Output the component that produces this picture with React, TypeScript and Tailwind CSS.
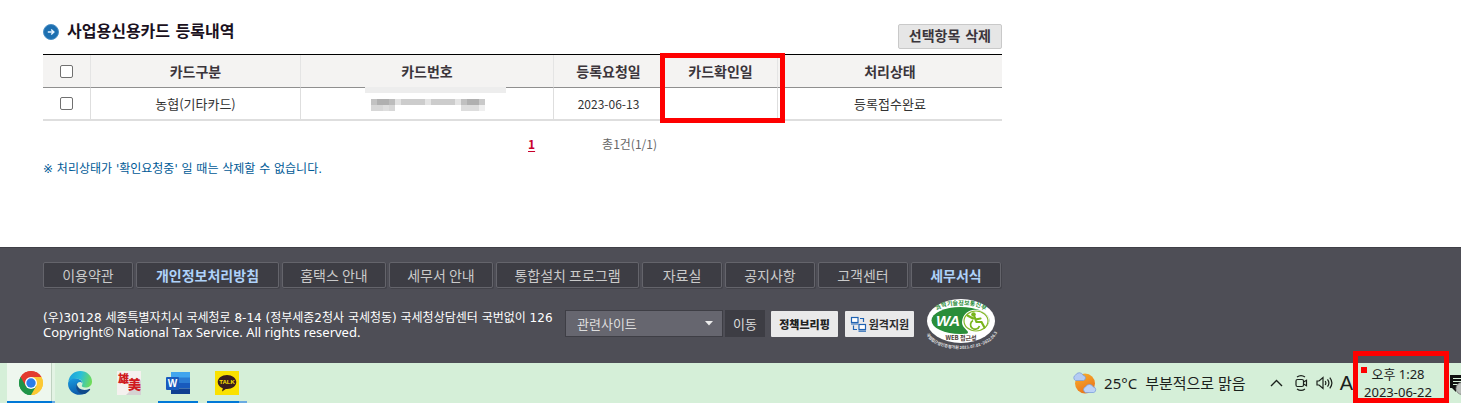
import React from "react";

type FooterLink = { label: string; width: string; strong?: boolean };

const footerLinks: FooterLink[] = [
  { label: "이용약관", width: "w-[90px]" },
  { label: "개인정보처리방침", width: "w-[143px]", strong: true },
  { label: "홈택스 안내", width: "w-[104px]" },
  { label: "세무서 안내", width: "w-[104px]" },
  { label: "통합설치 프로그램", width: "w-[143px]" },
  { label: "자료실", width: "w-[80px]" },
  { label: "공지사항", width: "w-[90px]" },
  { label: "고객센터", width: "w-[90px]" },
  { label: "세무서식", width: "w-[90px]", strong: true },
];

function ArrowBullet() {
  return (
    <svg width="16" height="16" viewBox="0 0 16 16" aria-hidden="true">
      <circle cx="8" cy="8" r="7.5" fill="#1d6fb0" stroke="#4a8fc4" />
      <path d="M4.8 8h6M8.2 5.4 10.9 8l-2.7 2.6" fill="none" stroke="#e6f4ff" strokeWidth="1.4" />
    </svg>
  );
}

const maskCells: [number, number, number, string][] = [
  [6, 12, 6, "#c2c2c2"], [12, 12, 12, "#b0b0b0"], [24, 12, 6, "#bcbcbc"], [30, 12, 6, "#e2e2e2"],
  [36, 12, 24, "#cccccc"], [60, 12, 6, "#e4e4e4"], [66, 12, 24, "#cccccc"], [90, 12, 6, "#e4e4e4"],
  [96, 12, 6, "#c0c0c0"], [102, 12, 12, "#b0b0b0"], [114, 12, 6, "#c9c9c9"],
  [6, 18, 12, "#d7d7d7"], [18, 18, 6, "#dedede"], [24, 18, 6, "#d7d7d7"],
  [96, 18, 18, "#dddddd"], [114, 18, 6, "#efefef"],
];

function MaskedNumber() {
  return (
    <svg className="absolute -top-px left-16" width="141" height="24" viewBox="0 0 141 24" role="img" aria-label="카드번호">
      <rect width="141" height="6" fill="#ededed" />
      {maskCells.map(([x, y, w, fill]) => (
        <rect key={`${x}-${y}`} x={x} y={y} width={w} height="6" fill={fill} />
      ))}
    </svg>
  );
}

function CardTable() {
  const th = "border-r border-[#e4e4e4] text-sm leading-4 font-bold text-[#3b353b]";
  const td = "border-r border-[#dedede] text-[13px] leading-4 text-[#333]";
  const box = "mx-auto block size-[13px] appearance-none rounded-[2px] border border-[#707070] bg-white checked:bg-[#0075ff]";
  return (
    <div className="relative">
      <table className="w-full table-fixed border-separate border-spacing-0 border-t border-black text-center">
        <colgroup>
          <col className="w-[48px]" />
          <col className="w-[210px]" />
          <col className="w-[253px]" />
          <col className="w-[110px]" />
          <col className="w-[114px]" />
          <col />
        </colgroup>
        <thead>
          <tr className="h-[33px] bg-[#f4f3f2] [&>th]:border-b [&>th]:border-b-[#8f8f8f]">
            <th className={th}><input type="checkbox" aria-label="전체 선택" className={box} /></th>
            <th className={th}>카드구분</th>
            <th className={th}>카드번호</th>
            <th className={th}>등록요청일</th>
            <th className={th}>카드확인일</th>
            <th className="text-sm leading-4 font-bold text-[#3b353b]">처리상태</th>
          </tr>
        </thead>
        <tbody>
          <tr className="h-[33px] [&>td]:border-b-2 [&>td]:border-b-[#dedede]">
            <td className={td}><input type="checkbox" aria-label="농협(기타카드) 선택" className={box} /></td>
            <td className={td}>농협(기타카드)</td>
            <td className={`${td} relative`}><MaskedNumber /></td>
            <td className="border-r border-[#dedede] text-xs leading-4 text-[#333]">2023-06-13</td>
            <td className={td}></td>
            <td className="text-[13px] leading-4 text-[#333]">등록접수완료</td>
          </tr>
        </tbody>
      </table>
      <div className="pointer-events-none absolute -top-px left-[617px] h-[70px] w-[125px] border-[5px] border-[#fe0000]" />
    </div>
  );
}

function WebAccessMark() {
  return (
    <svg width="74" height="58" viewBox="0 -3 74 58" role="img" aria-label="WEB 접근성">
      <defs>
        <path id="mark-top" d="M8 19.500C11 9.500 22 7 36 7S61 9.500 64 19.500" />
        <path id="mark-bottom" d="M1 36C10 56 62 56 72 35" />
      </defs>
      <ellipse cx="36" cy="23" rx="34" ry="22" fill="#fff" />
      <ellipse cx="35.500" cy="22.500" rx="29" ry="13.500" fill="#2a8e3a" />
      <path d="M37 24C38 14 46 10.500 53 12 61 14 65 18.500 64.500 23 63 31 53 36 42 36 46 33 37 31 37 24Z" fill="#fff" />
      <ellipse cx="51" cy="23" rx="12" ry="10" fill="#fff" stroke="#86b82a" strokeWidth="1.200" />
      <text x="11" y="28" fontSize="15" fontWeight="700" fontStyle="italic" fill="#fff" fontFamily="Liberation Sans, sans-serif">WA</text>
      <circle cx="48.500" cy="16.500" r="2.300" fill="#79b51c" />
      <path d="m49.500 19 2 5h5l3 5.500M42.500 17.500l5.500 3M50.500 21.500l5-1" fill="none" stroke="#79b51c" strokeWidth="2.200" strokeLinecap="round" />
      <path d="M48 22.500a4.600 4.600 0 1 0 6.500 5.500" fill="none" stroke="#79b51c" strokeWidth="1.700" />
      <text fontSize="6" fontWeight="700" fill="#2a8e3a"><textPath href="#mark-top" startOffset="50%" textAnchor="middle">과학기술정보통신부</textPath></text>
      <text x="36" y="42" fontSize="6" fontWeight="700" textAnchor="middle" fill="#4a3733">WEB 접근성</text>
      <text fontSize="4" fontWeight="700" fill="#e8e8e8"><textPath href="#mark-bottom" startOffset="50%" textAnchor="middle">한국웹접근성인증평가원 2021.07.01~2022.06.30</textPath></text>
    </svg>
  );
}

function SiteFooter() {
  return (
    <footer className="border-t border-[#404047] bg-[#4e4e56] pt-[14px] pr-4 pb-[14px] pl-[43px]">
      <nav className="flex gap-[3px]">
        {footerLinks.map((l) => (
          <a
            key={l.label}
            href="#"
            className={`${l.width} shrink-0 rounded-[2px] border border-[#64646b] bg-[#3d3d44] text-center text-sm leading-6 whitespace-nowrap shadow-[1px_1px_0_#43434a] ${l.strong ? "font-bold text-[#aed2fa]" : "text-[#cacaca]"}`}
          >
            {l.label}
          </a>
        ))}
      </nav>
      <div className="mt-[10px] flex h-[51px] items-center">
        <address className="w-[522px] shrink-0 pt-0.5 font-['DejaVu_Sans','Noto_Sans_CJK_KR',sans-serif] text-xs leading-[14px] whitespace-nowrap text-white not-italic">
          <p>(우)30128 세종특별자치시 국세청로 8-14 (정부세종2청사 국세청동) 국세청상담센터 국번없이 126</p>
          <p className="font-['Noto_Sans','Noto_Sans_CJK_KR',sans-serif] text-[13px] leading-[14px]">Copyright© National Tax Service. All rights reserved.</p>
        </address>
        <div className="relative w-[158px] shrink-0">
          <select aria-label="관련사이트" className="block h-[27px] w-full appearance-none border border-[#3e3e45] bg-[#66666f] pl-[11px] text-[13px] leading-5 text-[#dedede]">
            <option>관련사이트</option>
          </select>
          <svg className="pointer-events-none absolute top-[11px] right-[10px]" width="8" height="5" viewBox="0 0 8 5" aria-hidden="true">
            <path d="M0 0h8L4 4.500Z" fill="#ececec" />
          </svg>
        </div>
        <button type="button" className="ml-0.5 h-[27px] w-10 shrink-0 bg-[#3d3d44] text-[13px] leading-5 text-[#dcdcdc]">이동</button>
        <a href="#" className="ml-[6px] flex h-[26px] w-[67px] shrink-0 items-center justify-center rounded-[1px] bg-[#e9e9ea] text-[11px] leading-4 font-black text-[#222]">정책브리핑</a>
        <a href="#" className="ml-[7px] flex h-[26px] w-[69px] shrink-0 items-center justify-center gap-0.5 rounded-[1px] bg-[#e9e9ea] text-[11px] leading-4 font-bold text-[#2d2d2d]">
          <svg width="17" height="16" viewBox="0 0 17 16" fill="none" stroke="#1f63b3" strokeWidth="1.200" aria-hidden="true">
            <rect x="1.500" y="1.500" width="6.500" height="5" fill="#fff" />
            <rect x="9" y="8.500" width="6.500" height="5" fill="#fff" />
            <path d="M10 2.500h3.500V6M3.500 9.500v4H7M8.500 15.200H16M1 8h7.500" />
          </svg>
          원격지원
        </a>
        <div className="ml-[11px] shrink-0"><WebAccessMark /></div>
      </div>
    </footer>
  );
}

function ChromeIcon() {
  return (
    <svg width="24" height="24" viewBox="0 0 24 24" aria-hidden="true">
      <path d="M12 12 1.610 6A12 12 0 0 1 22.390 6Z" fill="#e33b2e" />
      <path d="M12 12 22.390 6A12 12 0 0 1 12 24Z" fill="#fcc934" />
      <path d="M12 12v12A12 12 0 0 1 1.610 6Z" fill="#1e9447" />
      <path d="M12 6h10.390A12 12 0 0 1 12 24l5.200-9Z" fill="#fcc934" />
      <path d="m6.800 15-5.190-9A12 12 0 0 0 12 24l5.200-9Z" fill="#1e9447" />
      <path d="M12 6h10.390A12 12 0 0 0 1.610 6l5.190 9Z" fill="#e33b2e" />
      <circle cx="12" cy="12" r="6" fill="#fff" />
      <circle cx="12" cy="12" r="4.700" fill="#2a7de9" />
    </svg>
  );
}

function EdgeIcon() {
  return (
    <svg width="24" height="24" viewBox="0 0 24 24" aria-hidden="true">
      <defs>
        <linearGradient id="edge-top" x1="0" y1="0.300" x2="1" y2="0.500">
          <stop offset="0" stopColor="#1aa0dc" />
          <stop offset="0.500" stopColor="#2bbfd8" />
          <stop offset="1" stopColor="#6fdc58" />
        </linearGradient>
        <linearGradient id="edge-left" x1="0" y1="0" x2="0.300" y2="1">
          <stop offset="0" stopColor="#1b9de0" />
          <stop offset="1" stopColor="#0b5cab" />
        </linearGradient>
      </defs>
      <path d="M0.300 10.500C1.500 4 6.500 0 12.200 0 19 0 24 5 24 10.500c0 4-3 6-6.500 6-3 0-4.300-1-3.500-2.200C15.500 12 14 8 9 7.800 5 7.600 2 8.800.3 10.500Z" fill="url(#edge-top)" />
      <path d="M.1 12C.5 8.500 4.500 7.300 8 7.500c3.500.2 6.300 2 6.300 5-.3-1-1.300-1.500-2.300-1.500-2.500 0-4 2.500-3.300 5.300C9.500 20 14 22 17 22.800 8 26.500-.6 20 .1 12Z" fill="url(#edge-left)" />
      <path d="M8.700 12.800c-1.200 2.500-.6 6 1.800 8.100 2.600 2.400 5.700 2.500 7 1.800 2-1 3.700-2.600 4.600-4.200.3-.6-.2-.9-.7-.6-5.700 2.600-11.500.6-12.700-5.100Z" fill="#114a8b" />
    </svg>
  );
}

function CalligraphyIcon() {
  return (
    <svg width="24" height="24" viewBox="0 0 24 24" aria-hidden="true">
      <rect width="24" height="24" fill="#f5f1ef" />
      <path d="M24 9v15H9Z" fill="#d5d2d2" />
      <text x="1" y="12" fontSize="11" fontWeight="900" fill="#cf1a20">雄</text>
      <text x="11" y="18" fontSize="13" fontWeight="900" fill="#cf1a20">美</text>
    </svg>
  );
}

function WordIcon() {
  return (
    <svg width="24" height="24" viewBox="0 0 24 24" aria-hidden="true">
      <path d="M5 1h19v6H5Z" fill="#41a5ee" />
      <path d="M5 6.500h19V12H5Z" fill="#2b7cd3" />
      <path d="M5 12h19v5.500H5Z" fill="#185abd" />
      <path d="M5 17.500h19V23H5Z" fill="#103f91" />
      <rect y="6" width="13" height="13" rx="1" fill="#185abd" />
      <text x="6.500" y="16.200" fontSize="10" fontWeight="700" textAnchor="middle" fill="#fff" fontFamily="Liberation Sans, sans-serif">W</text>
    </svg>
  );
}

function TalkIcon() {
  return (
    <svg width="24" height="24" viewBox="0 0 24 24" aria-hidden="true">
      <rect width="24" height="24" fill="#fae100" />
      <path d="M12 4c5 0 9.300 3 9.300 7s-4 7-9.300 7l-1.200-.1L7 20.500l.8-3.300C4.700 16.100 2.700 13.800 2.700 11 2.700 7 7 4 12 4Z" fill="#371c1d" />
      <text x="12" y="13.200" fontSize="6" fontWeight="700" textAnchor="middle" fill="#fae100" fontFamily="Liberation Sans, sans-serif">TALK</text>
    </svg>
  );
}

function WeatherIcon() {
  return (
    <svg width="26" height="24" viewBox="0 0 26 24" aria-hidden="true">
      <defs>
        <linearGradient id="sun" x1="0.200" y1="0" x2="0.700" y2="1">
          <stop offset="0" stopColor="#f9ae2b" />
          <stop offset="1" stopColor="#e8701a" />
        </linearGradient>
      </defs>
      <circle cx="13" cy="12.500" r="10" fill="url(#sun)" />
      <path d="M3.500 9.500a3 3 0 0 1 .2-5.500A4 4 0 0 1 11 4.200a2.700 2.700 0 0 1 .5 5.300Z" fill="#b4cbf3" stroke="#7c9fdc" strokeWidth="0.800" />
      <path d="M13.500 21.500a3 3 0 0 1 .2-5.700 4.200 4.200 0 0 1 7.600.1 2.900 2.900 0 0 1 .5 5.600Z" fill="#bcd2f7" stroke="#7c9fdc" strokeWidth="0.800" />
    </svg>
  );
}

const tasks = [
  { name: "Chrome", icon: <ChromeIcon />, tile: "bg-[#eef7ee] shadow-[inset_-3px_0_0_#e3f3e4,inset_-4px_0_0_#bfd2c1]", line: "w-[45px]", tail: "w-[3px]" },
  { name: "Edge", icon: <EdgeIcon />, tile: "", line: "", tail: "" },
  { name: "雄美", icon: <CalligraphyIcon />, tile: "", line: "", tail: "" },
  { name: "Word", icon: <WordIcon />, tile: "", line: "w-10", tail: "" },
  { name: "KakaoTalk", icon: <TalkIcon />, tile: "", line: "w-8", tail: "w-2" },
];

function Taskbar() {
  return (
    <div className="flex h-10 items-stretch justify-between bg-[#d5efd8] text-[#1b211c]">
      <div className="flex gap-px pl-[7px]">
        {tasks.map((t) => (
          <button key={t.name} type="button" aria-label={t.name} className={`flex w-12 flex-col items-center justify-between pt-2 ${t.tile}`}>
            {t.icon}
            <span className="flex h-0.5 justify-center">
              {t.line && <span className={`h-full bg-[#0078d7] ${t.line}`} />}
              {t.tail && <span className={`h-full bg-[#6aabe2] ${t.tail}`} />}
            </span>
          </button>
        ))}
      </div>
      <div className="flex items-center">
        <WeatherIcon />
        <span className="ml-[6px] flex gap-2 font-['Noto_Sans','Noto_Sans_CJK_KR',sans-serif] text-[15px] leading-5 whitespace-nowrap">
          <span>25°C</span>
          <span>부분적으로 맑음</span>
        </span>
        <div className="ml-6 flex items-center">
          <svg width="13" height="8" viewBox="0 0 13 8" fill="none" stroke="#1b211c" strokeWidth="1.400" aria-hidden="true"><path d="m1 7 5.500-5.500L12 7" /></svg>
          <svg className="ml-3" width="13" height="18" viewBox="0 0 13 18" fill="none" stroke="#1b211c" strokeWidth="1.200" aria-hidden="true">
            <rect x="1" y="5.500" width="7.500" height="7" rx="1.500" />
            <path d="m8.500 8 3-1.800v5.600l-3-1.800M2 3Q6 .2 10 3M2 15q4 2.800 8 0" />
          </svg>
          <svg className="ml-2" width="18" height="16" viewBox="0 0 18 16" fill="none" stroke="#1b211c" strokeWidth="1.200" aria-hidden="true">
            <path d="M1 6v4h2l4 3.500v-11L3 6ZM9.200 6q1.300 2 0 4M11.500 4.300q2.800 3.700 0 7.400M13.800 2.700q4.200 5.300 0 10.600" />
          </svg>
          <span className="ml-1.5 font-['Liberation_Sans',sans-serif] text-xl leading-5">A</span>
        </div>
        <div className="relative flex h-full w-24 flex-col items-center justify-center pr-1.5 font-['Noto_Sans','Noto_Sans_CJK_KR',sans-serif] text-[13px] leading-[18px] whitespace-nowrap">
          <span>오후 1:28</span>
          <span>2023-06-22</span>
          <span className="pointer-events-none absolute -top-3 bottom-0 left-0 w-full border-[5px] border-[#fe0000]" />
          <span className="absolute top-1 left-2 size-[6px] bg-[#fe0000]" />
        </div>
        <svg width="12" height="24" viewBox="0 0 12 24" aria-hidden="true">
          <path d="M1 4h11v13H7v4l-4-4H1Z" fill="#111" />
          <path d="M4 7.500h8M4 10.500h8M4 13.500h5" stroke="#d5efd8" strokeWidth="1.200" />
          <circle cx="13" cy="17.500" r="6" fill="#b9bdb9" stroke="#777" strokeWidth="0.800" />
        </svg>
      </div>
    </div>
  );
}

export default function App() {
  return (
    <div className="flex flex-col overflow-hidden bg-white font-['Noto_Sans_CJK_KR',sans-serif]">
      <main className="max-w-[1002px] pt-6 pb-[69px] pl-[43px]">
        <div className="mb-[5px] flex items-start justify-between">
          <h1 className="flex h-4 items-center gap-2 font-['DejaVu_Sans','Noto_Sans_CJK_KR',sans-serif] text-base leading-4 font-bold text-[#1a1020]">
            <ArrowBullet />
            사업용신용카드 등록내역
          </h1>
          <button type="button" className="flex h-[25px] items-center rounded-[2px] border border-[#c9c9c9] bg-[#e6e6e6] px-[10px] pb-0.5 font-['DejaVu_Sans','Noto_Sans_CJK_KR',sans-serif] text-sm leading-5 font-bold text-[#3b353b]">선택항목 삭제</button>
        </div>
        <CardTable />
        <div className="mt-[14px] flex gap-[67px] pl-[485px] text-xs leading-[18px]">
          <a href="#" className="font-bold text-[#c8002c] underline underline-offset-2">1</a>
          <span className="text-[#666]">총1건(1/1)</span>
        </div>
        <p className="mt-[7px] font-['DejaVu_Sans','Noto_Sans_CJK_KR',sans-serif] text-xs leading-[18px] text-[#005a96]">※ 처리상태가 '확인요청중' 일 때는 삭제할 수 없습니다.</p>
      </main>
      <SiteFooter />
      <Taskbar />
    </div>
  );
}
